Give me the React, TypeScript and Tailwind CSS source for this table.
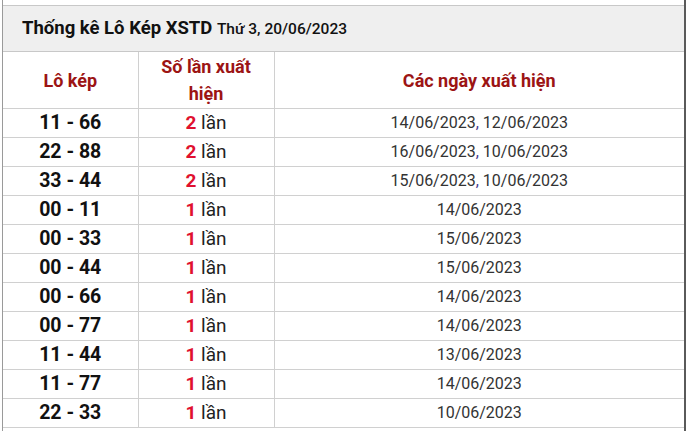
import React from "react";

const rows: { lo: string; count: number; dates: string[] }[] = [
  { lo: "11 - 66", count: 2, dates: ["14/06/2023", "12/06/2023"] },
  { lo: "22 - 88", count: 2, dates: ["16/06/2023", "10/06/2023"] },
  { lo: "33 - 44", count: 2, dates: ["15/06/2023", "10/06/2023"] },
  { lo: "00 - 11", count: 1, dates: ["14/06/2023"] },
  { lo: "00 - 33", count: 1, dates: ["15/06/2023"] },
  { lo: "00 - 44", count: 1, dates: ["15/06/2023"] },
  { lo: "00 - 66", count: 1, dates: ["14/06/2023"] },
  { lo: "00 - 77", count: 1, dates: ["14/06/2023"] },
  { lo: "11 - 44", count: 1, dates: ["13/06/2023"] },
  { lo: "11 - 77", count: 1, dates: ["14/06/2023"] },
  { lo: "22 - 33", count: 1, dates: ["10/06/2023"] },
];

export default function App() {
  return (
    <div className="h-[431px] w-[687px] overflow-hidden bg-white font-['Roboto',sans-serif]">
      <div className="ml-[2px] h-full w-[684px] border-l border-r-2 border-l-[#9a9a9a] border-r-[#5a5a5a] pt-[5px]">
        <table className="w-full table-fixed border-collapse">
          <colgroup>
            <col className="w-[135px]" />
            <col className="w-[136px]" />
            <col />
          </colgroup>
          <thead>
            <tr className="h-[46px] bg-[#efefef]">
              <th
                colSpan={3}
                className="border-t border-b border-[#c8c8c8] pl-[19px] text-left text-[18.5px] font-bold text-[#111]"
              >
                Thống kê Lô Kép XSTD{" "}
                <span className="text-[15.5px] font-medium">Thứ 3, 20/06/2023</span>
              </th>
            </tr>
            <tr className="h-[57px] text-[18px] font-bold leading-[27px] text-[#9c1414]">
              <th className="border-b border-r border-[#d0d0d0]">Lô kép</th>
              <th className="border-b border-r border-[#d0d0d0] px-4">Số lần xuất hiện</th>
              <th className="border-b border-[#d0d0d0]">Các ngày xuất hiện</th>
            </tr>
          </thead>
          <tbody>
            {rows.map((r) => (
              <tr key={r.lo} className="h-[29px] leading-[26px]">
                <td className="border-b border-r border-[#d0d0d0] text-center text-[19.5px] font-bold text-[#111]">
                  {r.lo}
                </td>
                <td className="border-b border-r border-[#d0d0d0] text-center text-[19px] text-[#222]">
                  <span className="font-bold text-[#e0102f]">{r.count}</span> lần
                </td>
                <td className="border-b border-[#d0d0d0] text-center text-[16px] text-[#333]">
                  {r.dates.map((d, i) => (
                    <React.Fragment key={d + i}>
                      {i > 0 && <span className="text-[#4b3b8f]">, </span>}
                      {d}
                    </React.Fragment>
                  ))}
                </td>
              </tr>
            ))}
          </tbody>
        </table>
      </div>
    </div>
  );
}
